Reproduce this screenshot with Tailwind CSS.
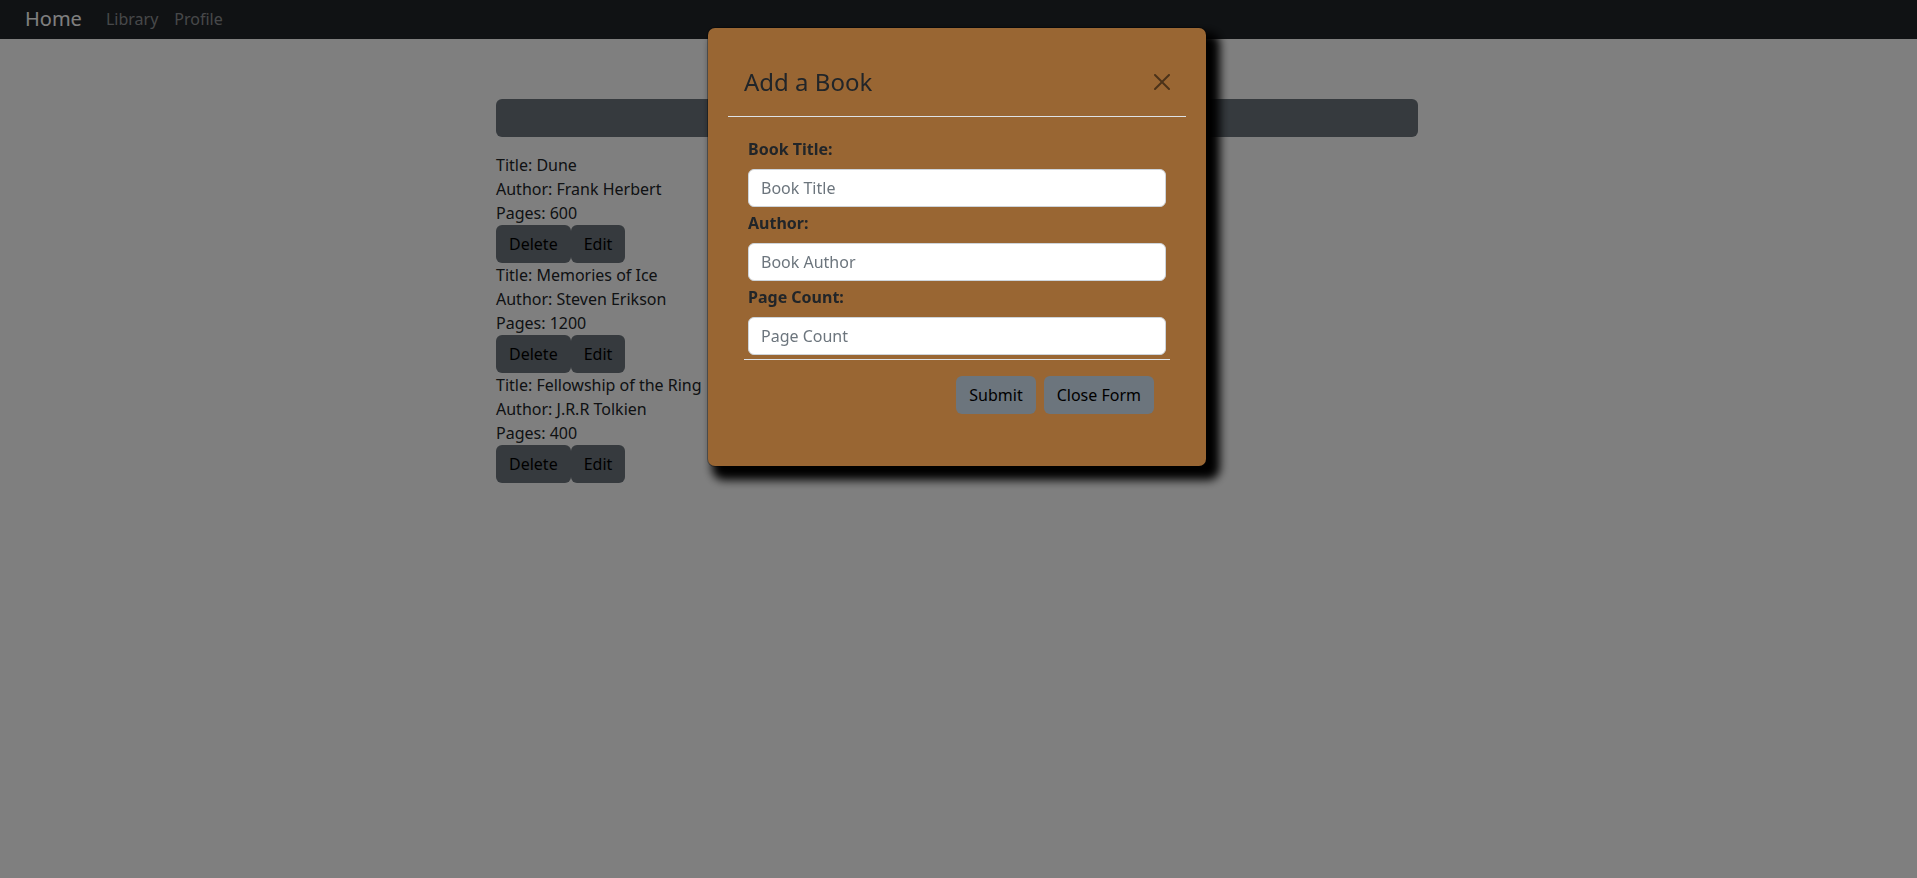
<!DOCTYPE html>
<html lang="en">
<head>
<meta charset="utf-8">
<meta name="viewport" content="width=device-width, initial-scale=1">
<title>Library</title>
<script src="https://cdn.jsdelivr.net/npm/@tailwindcss/browser@4"></script>
</head>
<body class="min-h-screen bg-white font-['Noto_Sans',sans-serif] text-base text-[#212529]">
<nav class="flex items-center bg-[#212529] px-[25px] pt-[3px] pb-[5px] text-[#8f9194]">
  <a href="#" class="mr-4 text-xl leading-[31px] text-white">Home</a>
  <a href="#" class="px-2">Library</a>
  <a href="#" class="px-2">Profile</a>
</nav>

<div class="pr-[3px] pt-15">
<main class="mx-auto max-w-[922px]">
  <button type="button" aria-label="Add a book" class="mb-4 block h-[38px] w-full rounded-md bg-[#6c757d]"></button>
  <ul>
    <li>
      <p>Title: Dune</p>
      <p>Author: Frank Herbert</p>
      <p>Pages: 600</p>
      <div class="flex text-black">
        <button type="button" class="h-[38px] rounded-md bg-[#6c757d] px-[13px]">Delete</button>
        <button type="button" class="h-[38px] rounded-md bg-[#6c757d] px-[13px]">Edit</button>
      </div>
    </li>
    <li>
      <p>Title: Memories of Ice</p>
      <p>Author: Steven Erikson</p>
      <p>Pages: 1200</p>
      <div class="flex text-black">
        <button type="button" class="h-[38px] rounded-md bg-[#6c757d] px-[13px]">Delete</button>
        <button type="button" class="h-[38px] rounded-md bg-[#6c757d] px-[13px]">Edit</button>
      </div>
    </li>
    <li>
      <p>Title: Fellowship of the Ring</p>
      <p>Author: J.R.R Tolkien</p>
      <p>Pages: 400</p>
      <div class="flex text-black">
        <button type="button" class="h-[38px] rounded-md bg-[#6c757d] px-[13px]">Delete</button>
        <button type="button" class="h-[38px] rounded-md bg-[#6c757d] px-[13px]">Edit</button>
      </div>
    </li>
  </ul>
</main>
</div>

<div class="fixed inset-0 overflow-y-auto bg-black/50 py-7 pr-[3px]">
  <div role="dialog" aria-modal="true" aria-labelledby="dialog-title" class="mx-auto max-w-[498px] rounded-[7px] bg-[#996633] px-5 pt-5 pb-9 shadow-[0_0_0_1px_rgba(0,0,0,0.3),9px_9px_10px_5px_#000]">
    <div class="flex items-center justify-between border-b border-[#dee2e6] p-4">
      <h1 id="dialog-title" class="text-2xl leading-9">Add a Book</h1>
      <button type="button" aria-label="Close" class="-mr-2 p-2 opacity-50">
        <svg class="size-4" viewBox="0 0 16 16" fill="#000"><path d="M.293.293a1 1 0 0 1 1.414 0L8 6.586 14.293.293a1 1 0 1 1 1.414 1.414L9.414 8l6.293 6.293a1 1 0 0 1-1.414 1.414L8 9.414l-6.293 6.293a1 1 0 0 1-1.414-1.414L6.586 8 .293 1.707a1 1 0 0 1 0-1.414z"/></svg>
      </button>
    </div>
    <form class="px-4 pt-5">
      <div class="px-1 pb-1">
        <label for="book-title" class="mb-2 block font-bold">Book Title:</label>
        <input id="book-title" type="text" placeholder="Book Title" class="mb-1 block h-[38px] w-full rounded-md border border-[#ced4da] bg-white px-3 placeholder:text-[#6c757d]">
        <label for="book-author" class="mb-2 block font-bold">Author:</label>
        <input id="book-author" type="text" placeholder="Book Author" class="mb-1 block h-[38px] w-full rounded-md border border-[#ced4da] bg-white px-3 placeholder:text-[#6c757d]">
        <label for="page-count" class="mb-2 block font-bold">Page Count:</label>
        <input id="page-count" type="text" placeholder="Page Count" class="block h-[38px] w-full rounded-md border border-[#ced4da] bg-white px-3 placeholder:text-[#6c757d]">
      </div>
      <div class="flex justify-end gap-2 border-t border-[#dee2e6] p-4 text-black">
        <button type="submit" class="h-[38px] rounded-md bg-[#6c757d] px-[13px]">Submit</button>
        <button type="button" class="h-[38px] rounded-md bg-[#6c757d] px-[13px]">Close Form</button>
      </div>
    </form>
  </div>
</div>
</body>
</html>
